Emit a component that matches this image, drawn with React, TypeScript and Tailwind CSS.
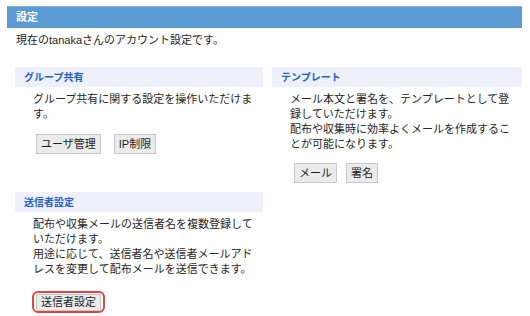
import React from "react";

function Btn({ children }: { children: React.ReactNode }) {
  return (
    <span className="inline-flex items-center h-[20px] px-[4px] bg-[#ebebeb] border border-[#c9c9c9] text-[11px] text-[#1e1e1e] leading-none">
      {children}
    </span>
  );
}

function Section({ title, children }: { title: string; children: React.ReactNode }) {
  return (
    <div>
      <div className="h-[20px] bg-[#eef0fb] flex items-center pl-[9px] text-[10px] font-bold text-[#1b62c9]">{title}</div>
      <div className="pl-[18px] pr-[10px]">{children}</div>
    </div>
  );
}

export default function App() {
  return (
    <div className="w-[530px] h-[316px] bg-white pt-[6px] font-['Liberation_Sans','Noto_Sans_CJK_JP',sans-serif] text-[#262626]">
      <div className="mx-[7px] w-[515px] h-[22px] bg-[#5b9ad4] border-t border-[#86b4e2] flex items-center pl-[9px] text-white font-bold text-[11px]">
        設定
      </div>
      <p className="ml-[16px] mt-[4px] text-[11px] leading-[17px]">現在のtanakaさんのアカウント設定です。</p>
      <div className="grid grid-cols-[248px_250px] gap-x-[9px] gap-y-[9px] ml-[15px] mt-[18px] items-start">
        <Section title="グループ共有">
          <p className="mt-[5px] text-[11px] leading-[15px]">グループ共有に関する設定を操作いただけます。</p>
          <div className="mt-[12px] ml-[3px] flex gap-[13px]">
            <Btn>ユーザ管理</Btn>
            <Btn>IP制限</Btn>
          </div>
        </Section>
        <Section title="テンプレート">
          <p className="mt-[5px] text-[11px] leading-[15px]">
            メール本文と署名を、テンプレートとして登録していただけます。
            <br />
            配布や収集時に効率よくメールを作成することが可能になります。
          </p>
          <div className="mt-[11px] ml-[4px] flex gap-[9px]">
            <Btn>メール</Btn>
            <Btn>署名</Btn>
          </div>
        </Section>
        <Section title="送信者設定">
          <p className="mt-[5px] text-[11px] leading-[15px]">
            配布や収集メールの送信者名を複数登録していただけます。
            <br />
            用途に応じて、送信者名や送信者メールアドレスを変更して配布メールを送信できます。
          </p>
          <div className="mt-[14px] ml-[-1px] inline-flex items-center h-[22px] px-[2px] border-2 border-[#e2463b] rounded-[6px]">
            <span className="inline-flex items-center h-[17px] px-[4px] bg-[#ebebeb] border border-[#c9c9c9] text-[11px] text-[#1e1e1e] leading-none">
              送信者設定
            </span>
          </div>
        </Section>
      </div>
    </div>
  );
}
